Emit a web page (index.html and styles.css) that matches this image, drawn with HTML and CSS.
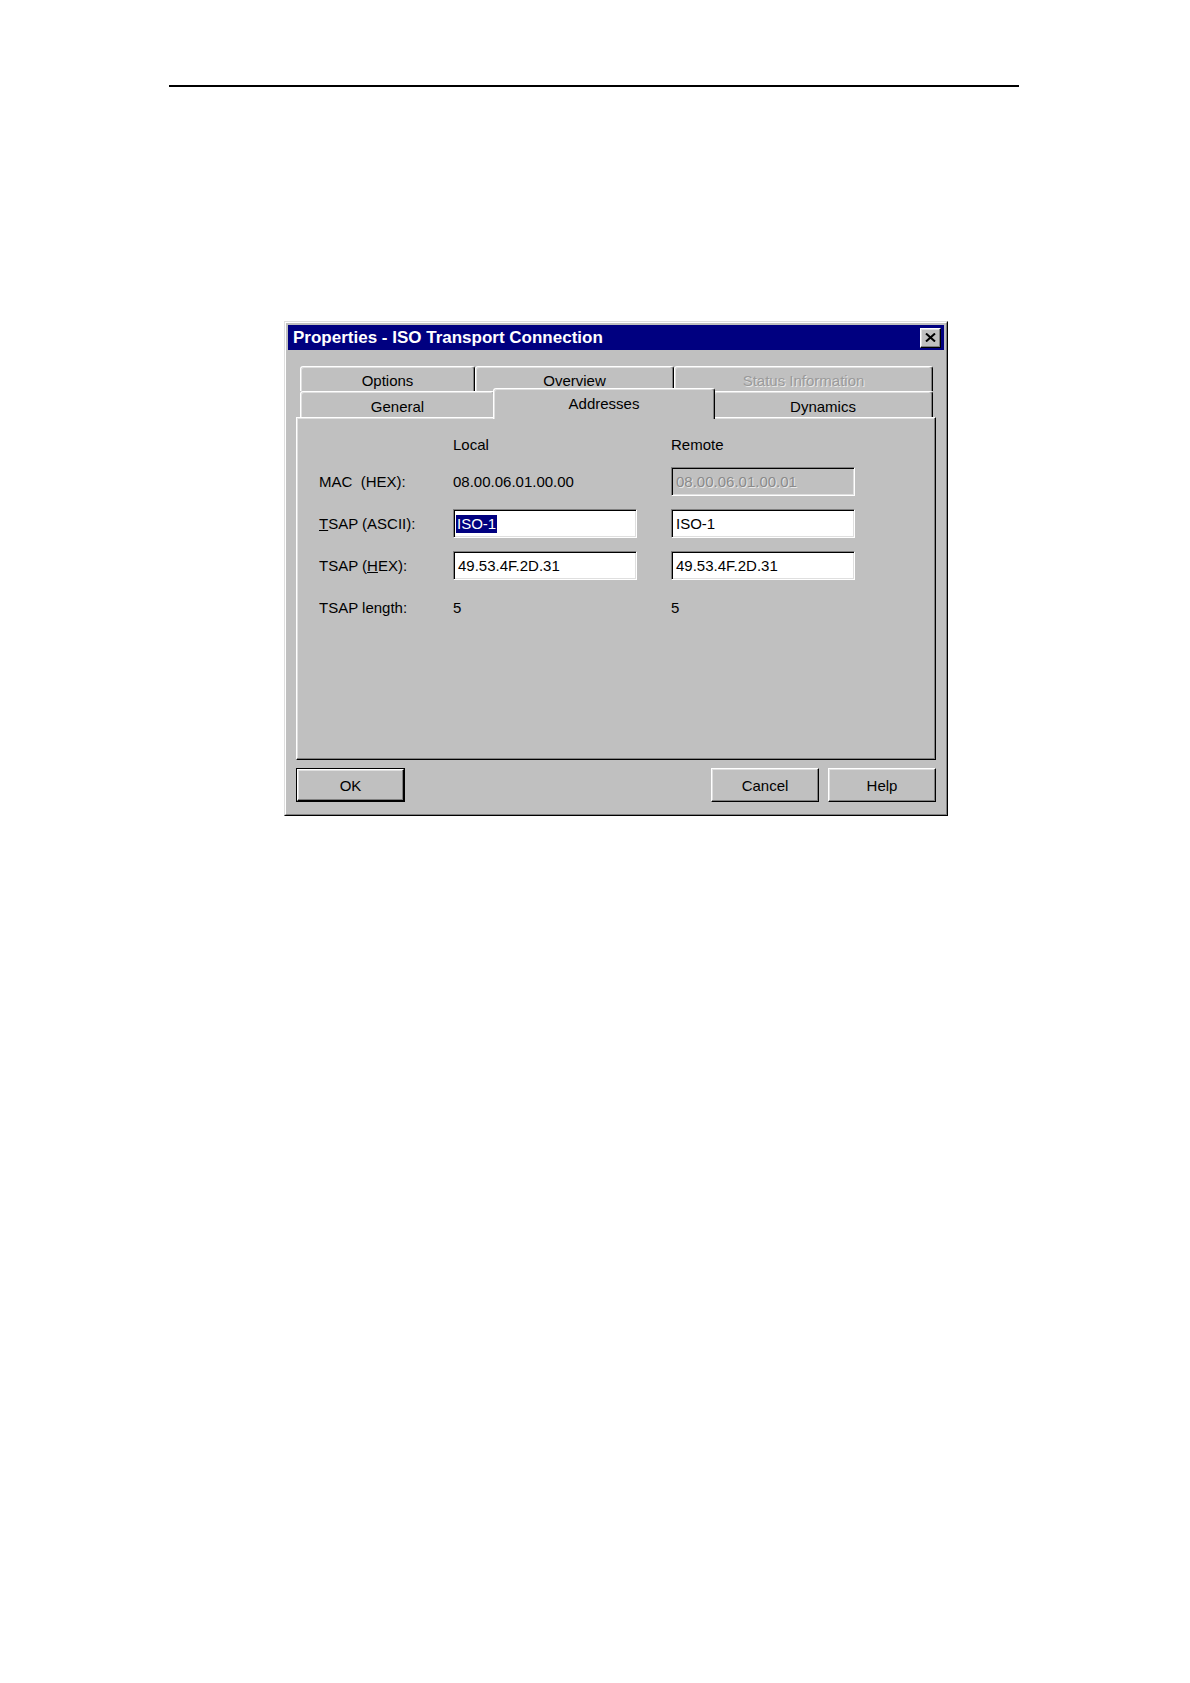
FILE: index.html
```html
<!DOCTYPE html>
<html lang="en">
<head>
<meta charset="utf-8">
<title>Properties - ISO Transport Connection</title>
<link rel="stylesheet" href="styles.css">
</head>
<body>
<div class="page">
  <div class="rule"></div>
  <div class="window">
    <div class="window-inner">
      <div class="titlebar">
        <span class="title">Properties - ISO Transport Connection</span>
        <span class="close-btn">
          <svg width="11" height="9" viewBox="0 0 11 9"><path d="M1 0.5 L10 8.5 M10 0.5 L1 8.5" stroke="#000" stroke-width="2" fill="none"/></svg>
        </span>
      </div>
      <div class="body">
        <div class="tabs">
          <div class="tab-row back">
            <div class="tab w-options">Options</div>
            <div class="tab w-overview">Overview</div>
            <div class="tab w-status disabled">Status Information</div>
          </div>
          <div class="tab-row front">
            <div class="tab w-general">General</div>
            <div class="tab w-addresses selected">Addresses</div>
            <div class="tab w-dynamics">Dynamics</div>
          </div>
        </div>
        <div class="panel">
          <div class="row head">
            <span class="label"></span>
            <span class="col-local">Local</span>
            <span class="col-remote">Remote</span>
          </div>
          <div class="row">
            <span class="label">MAC&nbsp; (HEX):</span>
            <span class="col-local">08.00.06.01.00.00</span>
            <span class="col-remote"><span class="field disabled-field">08.00.06.01.00.01</span></span>
          </div>
          <div class="row">
            <span class="label"><u>T</u>SAP (ASCII):</span>
            <span class="col-local"><span class="field"><span class="sel">ISO-1</span></span></span>
            <span class="col-remote"><span class="field">ISO-1</span></span>
          </div>
          <div class="row">
            <span class="label">TSAP (<u>H</u>EX):</span>
            <span class="col-local"><span class="field">49.53.4F.2D.31</span></span>
            <span class="col-remote"><span class="field">49.53.4F.2D.31</span></span>
          </div>
          <div class="row">
            <span class="label">TSAP length:</span>
            <span class="col-local">5</span>
            <span class="col-remote">5</span>
          </div>
        </div>
        <div class="buttons">
          <span class="btn default"><span class="btn-face">OK</span></span>
          <span class="spacer"></span>
          <span class="btn"><span class="btn-face">Cancel</span></span>
          <span class="btn"><span class="btn-face">Help</span></span>
        </div>
      </div>
    </div>
  </div>
</div>
</body>
</html>
```

FILE: styles.css
```css
html, body {
  margin: 0;
  padding: 0;
  background: #ffffff;
}

.page {
  width: 1190px;
  height: 1683px;
  padding-top: 85px;
  box-sizing: border-box;
  font-family: "Liberation Sans", Arial, sans-serif;
  font-size: 15px;
  color: #000;
}

.rule {
  margin-left: 169px;
  width: 850px;
  height: 2px;
  background: #000;
}

.window {
  margin-top: 234px;
  margin-left: 284px;
  width: 664px;
  height: 495px;
  box-sizing: border-box;
  border: 1px solid;
  border-color: #dfdfdf #000 #000 #dfdfdf;
  background: #c0c0c0;
}

.window-inner {
  height: 100%;
  box-sizing: border-box;
  border: 1px solid;
  border-color: #fff #808080 #808080 #fff;
  padding: 2px;
  display: flex;
  flex-direction: column;
}

.titlebar {
  height: 25px;
  flex: none;
  background: #000080;
  color: #fff;
  display: flex;
  align-items: center;
  justify-content: space-between;
  padding: 0 3px 0 5px;
}

.title {
  font-weight: bold;
  font-size: 17px;
}

.close-btn {
  width: 21px;
  height: 20px;
  box-sizing: border-box;
  background: #c0c0c0;
  border: 1px solid;
  border-color: #fff #000 #000 #fff;
  box-shadow: inset -1px -1px #808080, inset 1px 1px #dfdfdf;
  display: flex;
  align-items: center;
  justify-content: center;
}

.body {
  flex: 1;
  padding: 16px 8px 10px;
  display: flex;
  flex-direction: column;
}

.tabs {
  padding-left: 4px;
}

.tab-row {
  display: flex;
}

.tab {
  box-sizing: border-box;
  background: #c0c0c0;
  border: 1px solid;
  border-bottom: none;
  border-color: #fff #000 transparent #fff;
  border-radius: 3px 3px 0 0;
  box-shadow: inset -1px 0 #808080, inset 1px 1px #dfdfdf;
  display: flex;
  align-items: center;
  justify-content: center;
}

.back .tab {
  height: 25px;
  padding-top: 2px;
}

.front .tab {
  height: 26px;
  padding-top: 4px;
}

.w-options { width: 175px; }
.w-overview { width: 199px; }
.w-status { width: 259px; }
.w-general { width: 195px; }
.w-addresses { width: 218px; }
.w-dynamics { width: 220px; }

.tab.disabled {
  color: #9a9a9a;
  text-shadow: 1px 1px 0 #e8e8e8;
}

.front .tab.selected {
  position: relative;
  z-index: 2;
  height: 31px;
  margin: -3px -2px -2px;
  width: 222px;
  padding-top: 0;
  padding-bottom: 2px;
}

.panel {
  position: relative;
  z-index: 1;
  height: 343px;
  flex: none;
  box-sizing: border-box;
  border: 1px solid;
  border-color: #fff #000 #000 #fff;
  box-shadow: inset -1px -1px #808080, inset 1px 1px #dfdfdf;
  padding: 14px 0 0 22px;
}

.row {
  display: flex;
  align-items: center;
  height: 29px;
  margin-bottom: 13px;
}

.row.head {
  height: 25px;
  margin-bottom: 10px;
}

.label {
  width: 134px;
  flex: none;
}

.col-local {
  width: 218px;
  flex: none;
}

.col-remote {
  flex: none;
}

.field {
  display: flex;
  align-items: center;
  width: 184px;
  height: 29px;
  box-sizing: border-box;
  background: #fff;
  border: 1px solid;
  border-color: #808080 #fff #fff #808080;
  box-shadow: inset 1px 1px #000, inset -1px -1px #dfdfdf;
  padding-left: 4px;
}

.field.disabled-field {
  background: #c0c0c0;
  color: #8a8a8a;
  text-shadow: 1px 1px 0 #e8e8e8;
}

.sel {
  background: #000080;
  color: #fff;
  padding: 0 1px;
  margin-left: -2px;
  line-height: 18px;
}

.buttons {
  margin-top: 8px;
  display: flex;
}

.spacer {
  flex: 1;
}

.btn {
  width: 108px;
  height: 34px;
  box-sizing: border-box;
  margin-left: 9px;
  display: block;
}

.btn:first-child {
  margin-left: 0;
}

.btn-face {
  display: flex;
  align-items: center;
  justify-content: center;
  height: 100%;
  box-sizing: border-box;
  border: 1px solid;
  border-color: #fff #000 #000 #fff;
  box-shadow: inset -1px -1px #808080, inset 1px 1px #dfdfdf;
}

.btn.default {
  width: 109px;
  border: 1px solid #000;
}
```
